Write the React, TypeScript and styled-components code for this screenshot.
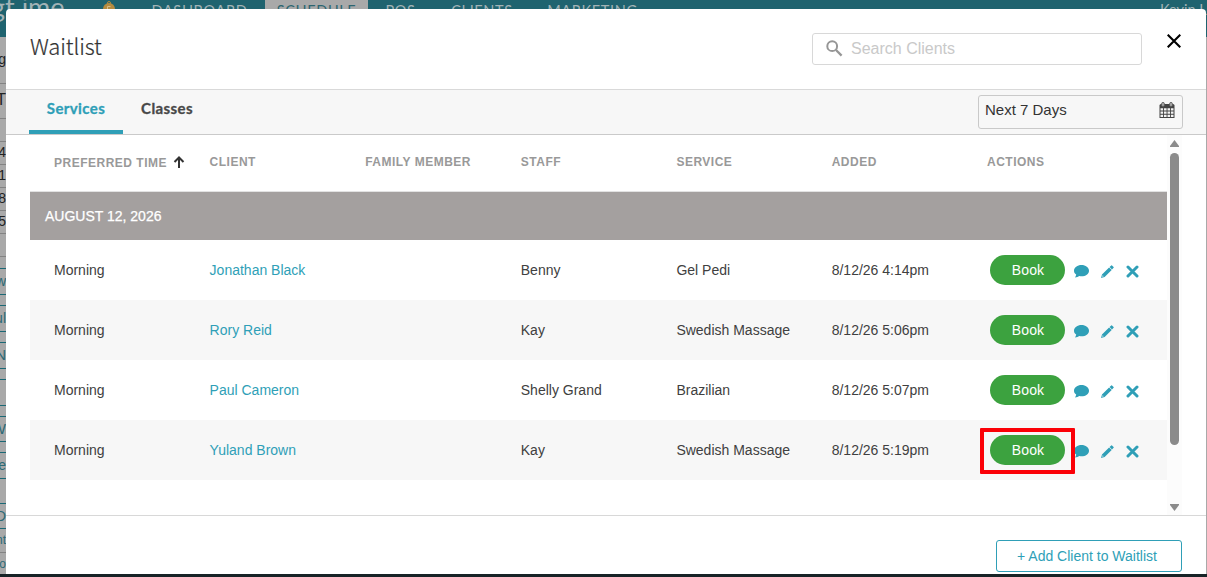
import React from "react";
import styled, { createGlobalStyle } from "styled-components";

const teal = "#2f9fb7";
const sans = `"Liberation Sans", Arial, sans-serif`;
const humanist = `"Noto Sans CJK SC", "Noto Sans", sans-serif`;

const GlobalStyle = createGlobalStyle`
  *, *::before, *::after { box-sizing: border-box; }
  html, body { margin: 0; padding: 0; overflow: hidden; }
  body { font-family: ${sans}; color: #404040; }
  button { font: inherit; cursor: pointer; }
`;

const Screen = styled.div`
  position: relative;
  width: 1207px;
  height: 577px;
  overflow: hidden;
  background: #a9a9a9;
`;

const TopNav = styled.nav`
  display: flex;
  height: 37px;
  background: #1f636f;
  color: #a3b3b6;
  font: 400 14.5px/16px Lato, sans-serif;
  overflow: hidden;
  white-space: nowrap;
`;

const Brand = styled.span`
  flex: none;
  width: 108px;
  margin-left: -9px;
  margin-top: -7px;
  font: 400 27px/28px Lato, sans-serif;
`;

const Medal = styled.svg`
  flex: none;
  margin: 1px 15px 0 0;
  width: 20px;
  height: 18px;
`;

const NavItem = styled.span<{ $width: number; $active?: boolean }>`
  flex: none;
  width: ${(p) => p.$width}px;
  padding-top: 3px;
  text-align: center;
  letter-spacing: 0.65px;
  background: ${(p) => (p.$active ? "#a9a9a9" : "transparent")};
  color: ${(p) => (p.$active ? "#2c6570" : "inherit")};
`;

const Account = styled.span`
  margin-left: auto;
  width: 47px;
  padding-top: 2px;
`;

const Agenda = styled.div`
  display: flex;
  flex-direction: column;
`;

const Slot = styled.div<{ $height: number; $line: string; $ink: string; $size: number }>`
  display: flex;
  align-items: center;
  justify-content: flex-end;
  flex: none;
  width: 6px;
  height: ${(p) => p.$height}px;
  padding-bottom: 2px;
  overflow: hidden;
  border-bottom: 1px solid ${(p) => p.$line};
  color: ${(p) => p.$ink};
  font-size: ${(p) => p.$size}px;
  line-height: 1;
  white-space: nowrap;
`;

const Taskbar = styled.div`
  position: absolute;
  left: 0;
  right: 0;
  bottom: 0;
  height: 3px;
  background: #172326;
`;

const Modal = styled.section`
  position: absolute;
  left: 6px;
  top: 9px;
  width: 1200px;
  height: 565px;
  display: flex;
  flex-direction: column;
  background: #fff;
  border-radius: 4px 4px 0 0;
  overflow: hidden;
`;

const Header = styled.header`
  display: flex;
  align-items: flex-start;
  height: 80px;
  padding: 24px 25px 0 24px;
`;

const Title = styled.h1`
  flex: 1;
  margin: -2px 0 0;
  font: 300 22px/29px ${humanist};
  letter-spacing: -0.1px;
  color: #333;
  -webkit-text-stroke: 0.2px #333;
`;

const SearchBox = styled.label`
  display: flex;
  align-items: center;
  width: 330px;
  height: 32px;
  padding: 0 0 1px 13px;
  border: 1px solid #d8d8d8;
  border-radius: 3px;
  color: #c9c9c9;
  font-size: 16px;
  svg { margin-right: 8px; }
`;

const CloseButton = styled.button`
  width: 14px;
  height: 14px;
  margin: 1px 0 0 25px;
  padding: 0;
  border: 0;
  background: none;
  svg { display: block; }
`;

const TabBar = styled.div`
  display: flex;
  height: 46px;
  padding: 0 23px;
  background: #f7f7f7;
  border-top: 1px solid #d9d9d9;
  border-bottom: 1px solid #cacaca;
`;

const Tab = styled.button<{ $active?: boolean }>`
  width: ${(p) => (p.$active ? 94 : 88)}px;
  height: 44px;
  padding: 0 0 5px;
  border: 0;
  border-bottom: 4px solid ${(p) => (p.$active ? teal : "transparent")};
  background: none;
  font: 700 15px/20px Lato, sans-serif;
  letter-spacing: 0.4px;
  color: ${(p) => (p.$active ? teal : "#484848")};
  -webkit-text-stroke: 0.3px currentColor;
`;

const RangePicker = styled.div`
  display: flex;
  justify-content: space-between;
  width: 205px;
  height: 34px;
  margin: 5px 0 0 auto;
  padding: 5px 7px 0 6px;
  border: 1px solid #c9c9c9;
  border-radius: 3px;
  font-size: 15px;
  line-height: 18px;
  color: #333;
  svg { margin-top: 1px; }
`;

const Body = styled.div`
  display: flex;
  height: 380px;
  padding-left: 24px;
`;

const Table = styled.div`
  width: 1137px;
`;

const Row = styled.div<{ $striped?: boolean }>`
  display: grid;
  grid-template-columns: 155.6px 155.6px 155.6px 155.6px 155.3px 155.3px auto;
  align-items: center;
  height: 60px;
  padding-left: 24px;
  background: ${(p) => (p.$striped ? "#f7f7f7" : "#fff")};
  font-size: 14px;
`;

const HeadRow = styled(Row)`
  height: 57px;
  padding-bottom: 3px;
  border-bottom: 1px solid #e2e2e2;
  font-size: 12px;
  font-weight: 700;
  letter-spacing: 0.5px;
  color: #999;
`;

const SortLabel = styled.span`
  display: flex;
  align-items: center;
  gap: 6px;
  padding-top: 2px;
  white-space: nowrap;
  svg { margin: -2px 0 0 0; }
`;

const DateBand = styled.div`
  height: 48px;
  padding-left: 15px;
  background: #a4a09f;
  color: #fff;
  font-size: 14px;
  line-height: 49px;
  -webkit-text-stroke: 0.25px #fff;
`;

const ClientLink = styled.a`
  color: ${teal};
`;

const Actions = styled.div`
  position: relative;
  display: flex;
  align-items: center;
  padding-left: 3px;
  color: ${teal};
  svg { display: block; margin: 2px 12px 0 0; }
`;

const BookButton = styled.button`
  width: 75px;
  height: 30px;
  margin-right: 9px;
  padding: 0 0 1px 1px;
  border: 0;
  border-radius: 15px;
  background: #3ca23f;
  color: #fff;
  font-size: 14px;
  letter-spacing: 0.15px;
`;

const Highlight = styled.span`
  position: absolute;
  z-index: 1;
  left: -7px;
  top: -7px;
  width: 95px;
  height: 46px;
  border: 4px solid #fb0007;
  border-radius: 1px;
`;

const Scrollbar = styled.div`
  display: flex;
  flex-direction: column;
  align-items: center;
  width: 15px;
  padding: 5px 0 4px;
  background: #fcfcfc;
  svg { display: block; }
`;

const Thumb = styled.div`
  width: 9px;
  height: 292px;
  margin: 6px 0 auto;
  border-radius: 5px;
  background: #8b8b8b;
`;

const Footer = styled.footer`
  flex: 1;
  display: flex;
  justify-content: flex-end;
  align-items: flex-start;
  padding: 24px 24px 0 0;
  border-top: 1px solid #d8d8d8;
`;

const AddButton = styled.button`
  width: 186px;
  height: 32px;
  padding: 0 4px 0 0;
  border: 1px solid ${teal};
  border-radius: 3px;
  background: #fff;
  color: ${teal};
  font-size: 14px;
`;

const SearchIcon = () => (
  <svg width="17" height="17" viewBox="0 0 17 17" fill="none" stroke="#969696">
    <circle cx="6.2" cy="6.2" r="4.9" strokeWidth="2" />
    <path d="M10 10 L15.6 15.6" strokeWidth="2.3" />
  </svg>
);

const CalendarIcon = () => (
  <svg width="16" height="17" viewBox="0 0 16 17">
    <path d="M0.5 3.5 Q0.5 2 2 2 H14 Q15.5 2 15.5 3.5 V16 H0.5 Z" fill="#444" />
    <path
      d="M1.5 6.3h2.6v2.3H1.5zM5 6.3h2.6v2.3H5zM8.5 6.3H11v2.3H8.5zM11.9 6.3h2.6v2.3h-2.6zM1.5 9.5h2.6v2.3H1.5zM5 9.5h2.6v2.3H5zM8.5 9.5H11v2.3H8.5zM11.9 9.5h2.6v2.3h-2.6zM1.5 12.7h2.6v2.3H1.5zM5 12.7h2.6v2.3H5zM8.5 12.7H11v2.3H8.5zM11.9 12.7h2.6v2.3h-2.6z"
      fill="#f4f4f4"
    />
    <rect x="2.6" y="0.4" width="2.8" height="4.2" rx="1.4" fill="#aaa" stroke="#555" strokeWidth=".8" />
    <rect x="10.6" y="0.4" width="2.8" height="4.2" rx="1.4" fill="#aaa" stroke="#555" strokeWidth=".8" />
  </svg>
);

const CommentIcon = () => (
  <svg width="15" height="13" viewBox="0 0 15 13">
    <path
      d="M7.5 0C3.4 0 0 2.5 0 5.7c0 1.6.8 2.9 2.2 3.9-.1 1-.6 2-1.2 3 1.8-.1 3.2-.6 4.3-1.5.7.1 1.5.2 2.2.2 4.1 0 7.5-2.5 7.5-5.6S11.6 0 7.5 0z"
      fill="currentColor"
    />
  </svg>
);

const PencilIcon = () => (
  <svg width="13" height="13" viewBox="0 0 13 13">
    <path d="M8.6 2 L10.2 .4 Q10.6 0 11 .4 L12.6 1.9 Q13 2.3 12.6 2.7 L11 4.4 Z" fill="currentColor" />
    <path
      fillRule="evenodd"
      d="M8.1 2.4 L10.7 4.9 L3.6 12 L0 13 L1 9.4 Z M1.7 10.3 L1.2 11.8 L2.7 11.3 Z"
      fill="currentColor"
    />
  </svg>
);

const RemoveIcon = () => (
  <svg width="13" height="13" viewBox="0 0 13 13" stroke="currentColor" strokeWidth="3" strokeLinecap="round">
    <path d="M2 2 L11 11 M11 2 L2 11" />
  </svg>
);

const agenda: [number, string, boolean, number][] = [
  [47, "g", false, 14],
  [35, "T", false, 16],
  [23, "", false, 14],
  [23, "4", false, 14],
  [23, "11", false, 14],
  [23, "8", false, 14],
  [23, "25", false, 14],
  [23, "", false, 14],
  [12, "", true, 14],
  [26, "w", true, 14],
  [11, "", true, 14],
  [26, "ul", true, 14],
  [11, "", true, 14],
  [26, "N", true, 15],
  [11, "", true, 14],
  [26, "", true, 14],
  [11, "", true, 14],
  [25, "W", true, 15],
  [11, "", true, 14],
  [26, "e", true, 14],
  [25, "", true, 14],
  [25, "D", true, 15],
  [24, "nt", false, 12],
  [24, "oo", false, 12],
];

const entries = [
  { client: "Jonathan Black", staff: "Benny", service: "Gel Pedi", added: "8/12/26 4:14pm" },
  { client: "Rory Reid", staff: "Kay", service: "Swedish Massage", added: "8/12/26 5:06pm" },
  { client: "Paul Cameron", staff: "Shelly Grand", service: "Brazilian", added: "8/12/26 5:07pm" },
  { client: "Yuland Brown", staff: "Kay", service: "Swedish Massage", added: "8/12/26 5:19pm", highlighted: true },
];

export default function App() {
  return (
    <Screen>
      <GlobalStyle />
      <TopNav>
        <Brand>gt ime</Brand>
        <Medal viewBox="0 0 20 18">
          <circle cx="10" cy="2" r="1.5" fill="none" stroke="#b58b3f" />
          <circle cx="10" cy="8" r="6" fill="#b58b3f" />
          <path d="M8.5 5.5h3M8.5 5.5v3" stroke="#d6bd86" fill="none" />
        </Medal>
        <NavItem $width={131}>DASHBOARD</NavItem>
        <NavItem $width={103} $active>SCHEDULE</NavItem>
        <NavItem $width={65}>POS</NavItem>
        <NavItem $width={98}>CLIENTS</NavItem>
        <NavItem $width={123}>MARKETING</NavItem>
        <Account>Kevin L</Account>
      </TopNav>
      <Agenda>
        {agenda.map(([height, label, booked, size], i) => (
          <Slot key={i} $height={height} $size={size} $line={booked ? "#1b6875" : "#838383"} $ink={i > 8 ? "#2c6975" : "#222"}>
            {label}
          </Slot>
        ))}
      </Agenda>
      <Taskbar />
      <Modal>
        <Header>
          <Title>Waitlist</Title>
          <SearchBox>
            <SearchIcon />
            Search Clients
          </SearchBox>
          <CloseButton aria-label="Close">
            <svg width="14" height="14" viewBox="0 0 14 14" stroke="#000" strokeWidth="2.1">
              <path d="M.7.7 L13.3 13.3 M13.3.7 L.7 13.3" />
            </svg>
          </CloseButton>
        </Header>
        <TabBar>
          <Tab $active>Services</Tab>
          <Tab>Classes</Tab>
          <RangePicker>
            Next 7 Days
            <CalendarIcon />
          </RangePicker>
        </TabBar>
        <Body>
          <Table>
            <HeadRow>
              <SortLabel>
                PREFERRED TIME
                <svg width="12" height="12" viewBox="0 0 12 12" fill="none" stroke="#333" strokeWidth="2">
                  <path d="M6 12V1.5M1.5 6L6 1.5L10.5 6" />
                </svg>
              </SortLabel>
              <span>CLIENT</span>
              <span>FAMILY MEMBER</span>
              <span>STAFF</span>
              <span>SERVICE</span>
              <span>ADDED</span>
              <span>ACTIONS</span>
            </HeadRow>
            <DateBand>AUGUST 12, 2026</DateBand>
            {entries.map((e, i) => (
              <Row key={e.client} $striped={i % 2 === 1}>
                <span>Morning</span>
                <ClientLink>{e.client}</ClientLink>
                <span />
                <span>{e.staff}</span>
                <span>{e.service}</span>
                <span>{e.added}</span>
                <Actions>
                  <BookButton>Book</BookButton>
                  <CommentIcon />
                  <PencilIcon />
                  <RemoveIcon />
                  {e.highlighted && <Highlight />}
                </Actions>
              </Row>
            ))}
          </Table>
          <Scrollbar>
            <svg width="9" height="7" viewBox="0 0 9 7">
              <path d="M4.5 0L9 6V7H0V6Z" fill="#8b8b8b" />
            </svg>
            <Thumb />
            <svg width="9" height="7" viewBox="0 0 9 7">
              <path d="M4.5 7L9 1V0H0V1Z" fill="#8b8b8b" />
            </svg>
          </Scrollbar>
        </Body>
        <Footer>
          <AddButton>+ Add Client to Waitlist</AddButton>
        </Footer>
      </Modal>
    </Screen>
  );
}
